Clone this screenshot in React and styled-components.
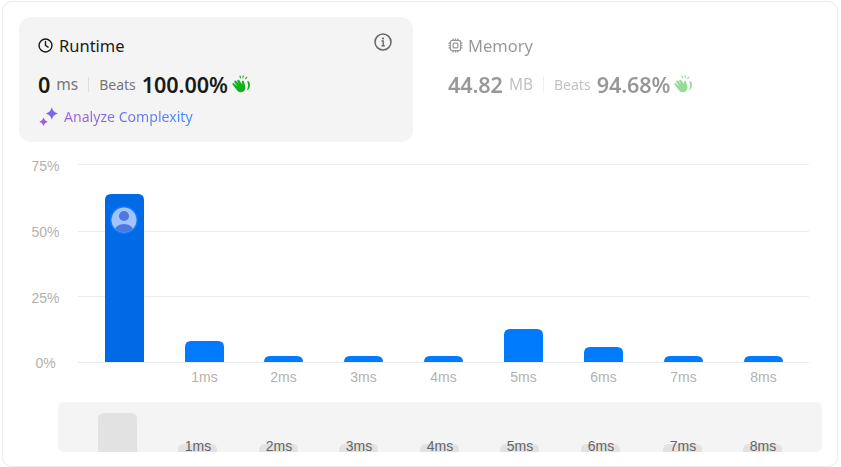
import styled, { createGlobalStyle } from "styled-components";

const GlobalStyle = createGlobalStyle`
  html, body {
    margin: 0;
    padding: 0;
    background: #fff;
    font-family: "Noto Sans", "Open Sans", sans-serif;
  }
`;

const Card = styled.div`
  box-sizing: border-box;
  width: 836px;
  height: 466px;
  margin: 1px 0 0 2px;
  padding: 15px 0 0 16px;
  border: 1px solid #ebebeb;
  border-radius: 10px;
  overflow: hidden;
`;

const Stats = styled.div`
  display: flex;
  height: 125px;
`;

const Panel = styled.div`
  box-sizing: border-box;
  flex: none;
  width: ${(p) => p.$width}px;
  height: 125px;
  padding: 16px 16px 0 ${(p) => (p.$active ? 19 : 16)}px;
  margin-right: 19px;
  border-radius: 12px;
  background: ${(p) => (p.$active ? "#f4f4f4" : "transparent")};
  opacity: ${(p) => (p.$active ? 1 : 0.45)};
  position: relative;
`;

const Title = styled.div`
  display: flex;
  align-items: center;
  gap: ${(p) => p.$gap}px;
  height: 24px;
  font-size: 16.5px;
  color: #1a1a1a;
  svg { flex: none; }
`;

const InfoButton = styled.span`
  position: absolute;
  top: 16px;
  right: 21px;
  display: flex;
  color: #6b6b6b;
`;

const Numbers = styled.div`
  display: flex;
  align-items: center;
  height: 26px;
  margin-top: 14px;
`;

const Value = styled.span`
  font-size: 21.6px;
  font-weight: 600;
  color: #1a1a1a;
  letter-spacing: -0.1px;
`;

const Unit = styled.span`
  margin-left: 6px;
  font-size: 15.5px;
  color: #777;
`;

const Divider = styled.span`
  width: 1px;
  height: 15px;
  margin: 0 10px;
  background: #ddd;
`;

const BeatsLabel = styled.span`
  font-size: 14px;
  color: #777;
  margin-right: 6px;
`;

const ClapIcon = styled.svg`
  margin-left: 4px;
  flex: none;
`;

const AnalyzeRow = styled.div`
  display: flex;
  align-items: center;
  gap: 6px;
  margin-top: 8px;
  padding-left: 1px;
  height: 22px;
`;

const AnalyzeText = styled.span`
  font-size: 14.1px;
  background: linear-gradient(90deg, #a55ce0, #3f8cff);
  -webkit-background-clip: text;
  background-clip: text;
  color: transparent;
`;

const ChartSvg = styled.svg`
  display: block;
  margin: 8px 0 0 -16px;
  font-family: "Liberation Sans", Arial, sans-serif;
`;

const BrushPanel = styled.div`
  width: 764px;
  height: 50px;
  margin: 14px 0 0 39px;
  border-radius: 6px;
  background: #f4f4f4;
  font-family: "Liberation Sans", Arial, sans-serif;
`;

const BrushSvg = styled.svg`
  display: block;
  overflow: visible;
`;

const AXIS = [
  { label: "75%", y: 164, textY: 171 },
  { label: "50%", y: 231, textY: 237 },
  { label: "25%", y: 296, textY: 303 },
  { label: "0%", y: 362, textY: 368 },
];

const BARS = [
  { x: 105, top: 194 },
  { x: 185, top: 341, label: "1ms" },
  { x: 264, top: 356, label: "2ms" },
  { x: 344, top: 356, label: "3ms" },
  { x: 424, top: 356, label: "4ms" },
  { x: 504, top: 329, label: "5ms" },
  { x: 584, top: 347, label: "6ms" },
  { x: 664, top: 356, label: "7ms" },
  { x: 744, top: 356, label: "8ms" },
];

const MINI = [
  { x: 40, top: 11 },
  { x: 120, top: 42, label: "1ms" },
  { x: 201, top: 42, label: "2ms" },
  { x: 281, top: 42, label: "3ms" },
  { x: 362, top: 42, label: "4ms" },
  { x: 442, top: 42, label: "5ms" },
  { x: 523, top: 42, label: "6ms" },
  { x: 605, top: 42, label: "7ms" },
  { x: 685, top: 42, label: "8ms" },
];

// chart svg starts at page y = 150, x = 3
const OX = 3;
const OY = 150;

function topRoundedBar(x, top, w, bottom, r) {
  const rr = Math.min(r, bottom - top);
  return `M${x} ${bottom}V${top + rr}Q${x} ${top} ${x + rr} ${top}H${x + w - rr}Q${x + w} ${top} ${x + w} ${top + rr}V${bottom}Z`;
}

function Clap({ color }) {
  return (
    <ClapIcon width="19" height="19" viewBox="0 0 19 19" fill="none">
      <path
        d="M1.800 8.200 5.500 11.500 2.500 7.400c-.9-1.300.8-2.600 1.800-1.300l3 3.600-1.900-3.300c-.7-1.300 1-2.300 1.900-1.100l3 4.200-.5-2.400c-.3-1.400 1.600-2 2.100-.6l1.200 3.900c.7 2.500.2 4.600-1.300 5.900-1.800 1.500-4.400 1.400-6.200-.2L.9 10C-.2 8.900.8 7.300 1.800 8.200Z"
        fill={color}
      />
      <path
        d="M15.300 6.400c1 2.800 1.100 6-.6 9 2.500-1.100 3.700-3.800 3.100-7-.2-1.400-2.100-3.300-2.500-2Z"
        fill={color}
      />
      <path d="M8.500 2.900 8 1M11 2.600l.3-1.900M13.600 3.600l1.200-1.500" stroke={color} strokeWidth="1.100" strokeLinecap="round" />
    </ClapIcon>
  );
}

function ClockIcon() {
  return (
    <svg width="15" height="15" viewBox="0 0 16 16" fill="none" stroke="#1a1a1a" strokeWidth="1.500" strokeLinecap="round" strokeLinejoin="round">
      <circle cx="8" cy="8" r="6.900" />
      <path d="M8 3.800V8l2.800 1.700" />
    </svg>
  );
}

function ChipIcon() {
  return (
    <svg width="15" height="15" viewBox="0 0 16 16" fill="none" stroke="#1a1a1a" strokeWidth="1.300">
      <rect x="2.500" y="2.500" width="11" height="11" rx="2.200" />
      <rect x="5.500" y="5.500" width="5" height="5" rx="1" />
      <path d="M5.500 .5v2M8 .5v2M10.500 .5v2M5.500 13.500v2M8 13.500v2M10.500 13.500v2M.5 5.500h2M.5 8h2M.5 10.500h2M13.500 5.500h2M13.500 8h2M13.500 10.500h2" />
    </svg>
  );
}

function InfoIcon() {
  return (
    <svg width="18" height="18" viewBox="0 0 18 18" fill="none" stroke="currentColor">
      <circle cx="9" cy="9" r="8" strokeWidth="1.600" />
      <circle cx="9" cy="5.500" r="1.100" fill="currentColor" stroke="none" />
      <path d="M7.500 8h1.700v4.800M7.400 12.800h3.400" strokeWidth="1.400" />
    </svg>
  );
}

function SparkIcon() {
  return (
    <svg width="19" height="19" viewBox="0 0 19 19">
      <defs>
        <linearGradient id="spark" x1="0" y1="1" x2="1" y2="0">
          <stop offset="0" stopColor="#b05be0" />
          <stop offset="1" stopColor="#5b6cf0" />
        </linearGradient>
      </defs>
      <path
        d="M12.800 .2c.9 3.400 2.400 5 6 6.300-3.600 1.300-5.100 2.900-6 6.300-.9-3.400-2.400-5-6-6.300 3.600-1.300 5.100-2.900 6-6.300ZM4.500 10.400 6 13.200 8.700 14.700 6 16.200 4.500 19 3 16.200.3 14.700 3 13.200Z"
        fill="url(#spark)"
      />
    </svg>
  );
}

function MainChart() {
  return (
    <ChartSvg width="834" height="238" viewBox={`${OX} ${OY} 834 238`}>
      <defs>
        <clipPath id="avatar">
          <circle cx="124" cy="220" r="12.500" />
        </clipPath>
      </defs>
      {AXIS.map((a) => (
        <g key={a.label}>
          <line x1="78" x2="809" y1={a.y + 0.5} y2={a.y + 0.5} stroke="#ebebeb" />
          <text x="45.500" y={a.textY} textAnchor="middle" fontSize="14" fill="#b5b1ac">
            {a.label}
          </text>
        </g>
      ))}
      {BARS.map((b, i) => (
        <g key={b.x}>
          <path d={topRoundedBar(b.x, b.top, 39, 362, 6)} fill={i === 0 ? "#006ae6" : "#007aff"} />
          {b.label && (
            <text x={b.x + 19.500} y="382" textAnchor="middle" fontSize="14" fill="#b5b1ac">
              {b.label}
            </text>
          )}
        </g>
      ))}
      <circle cx="124" cy="220" r="14" fill="#0a7bff" />
      <circle cx="124" cy="220" r="12.500" fill="#a3c3ff" />
      <g clipPath="url(#avatar)" fill="#4d78e0">
        <circle cx="124" cy="216" r="5" />
        <ellipse cx="124" cy="230" rx="9" ry="6" />
      </g>
    </ChartSvg>
  );
}

function BrushChart() {
  return (
    <BrushPanel>
      <BrushSvg width="764" height="50" viewBox="0 0 764 50">
        {MINI.map((b) => (
          <g key={b.x}>
            <path d={topRoundedBar(b.x, b.top, 39, 50, 6)} fill="#e2e2e2" />
            {b.label && (
              <text x={b.x + 20} y="49" textAnchor="middle" fontSize="14" fill="#666">
                {b.label}
              </text>
            )}
          </g>
        ))}
      </BrushSvg>
    </BrushPanel>
  );
}

export default function App() {
  return (
    <>
      <GlobalStyle />
      <Card>
        <Stats>
          <Panel $active $width={394}>
            <Title $gap={6}>
              <ClockIcon />
              Runtime
            </Title>
            <InfoButton>
              <InfoIcon />
            </InfoButton>
            <Numbers>
              <Value>0</Value>
              <Unit>ms</Unit>
              <Divider />
              <BeatsLabel>Beats</BeatsLabel>
              <Value>100.00%</Value>
              <Clap color="#14b01e" />
            </Numbers>
            <AnalyzeRow>
              <SparkIcon />
              <AnalyzeText>Analyze Complexity</AnalyzeText>
            </AnalyzeRow>
          </Panel>
          <Panel $width={370}>
            <Title $gap={5}>
              <ChipIcon />
              Memory
            </Title>
            <Numbers>
              <Value>44.82</Value>
              <Unit>MB</Unit>
              <Divider />
              <BeatsLabel>Beats</BeatsLabel>
              <Value>94.68%</Value>
              <Clap color="#14b01e" />
            </Numbers>
          </Panel>
        </Stats>
        <MainChart />
        <BrushChart />
      </Card>
    </>
  );
}
